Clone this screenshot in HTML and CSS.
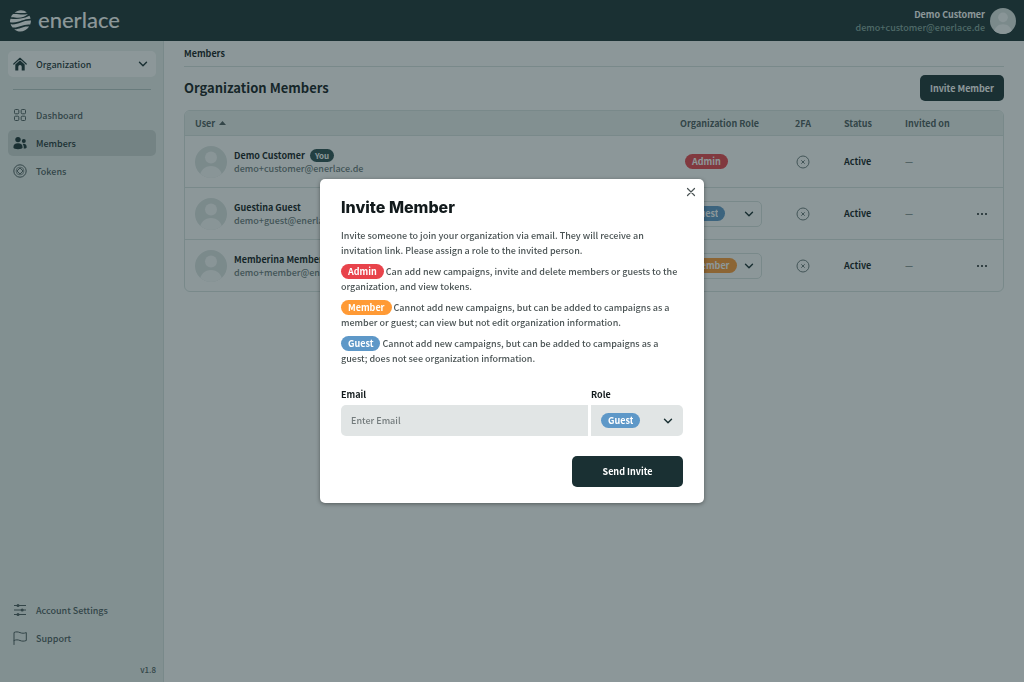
FILE: index.html
```
<!DOCTYPE html>
<html lang="en">

<head>
    <meta charset="utf-8">
    <meta name="viewport" content="width=device-width, initial-scale=1.0">
    <title>enerlace - Members</title>
    <link rel="stylesheet" href="styles.css">
</head>

<body>
    <!-- shared icons -->
    <svg class="sprite" aria-hidden="true">
        <symbol id="chevron" viewBox="0 0 10 10">
            <path d="M1.5 3.2 5 6.8 8.5 3.2" fill="none" stroke="currentColor" stroke-width="1.400" stroke-linecap="round" stroke-linejoin="round" />
        </symbol>
        <symbol id="avatar" viewBox="0 0 32 32">
            <clipPath id="round"><circle cx="16" cy="16" r="16" /></clipPath>
            <g clip-path="url(#round)">
                <rect width="32" height="32" fill="var(--avatar-back)" />
                <circle cx="16" cy="11.5" r="6" fill="var(--avatar-front)" />
                <path d="M4.500 32C5 24 10 20 16 20s11 4 11.500 12z" fill="var(--avatar-front)" />
            </g>
        </symbol>
        <symbol id="no" viewBox="0 0 14 14">
            <g fill="none" stroke="currentColor" stroke-width="1">
                <circle cx="7" cy="7" r="6" />
                <path d="M5.300 5.300l3.400 3.400M8.700 5.300l-3.400 3.400" />
            </g>
        </symbol>
        <symbol id="dots" viewBox="0 0 12 4">
            <g fill="currentColor">
                <circle cx="2" cy="2" r="1" />
                <circle cx="6" cy="2" r="1" />
                <circle cx="10" cy="2" r="1" />
            </g>
        </symbol>
    </svg>

    <header>
        <a class="logo" href="#">
            <svg width="21" height="22" viewBox="0 0 21 22" fill="currentColor" aria-hidden="true">
                <path d="M4.500 2.800C8-.7 13.500-.7 16.800 2.500 13 3.800 8 2.600 4.500 2.800z" />
                <path d="M1 7.200C1.700 5.500 2.300 4.500 3.300 4.100 8 3.700 12 5.500 18 3.900 16 6 12 7.800 8 7.800 5.500 7.800 3.500 7 1 7.200z" />
                <path d="M0 12.200C0 10.800.1 9.800.5 8.800 6 9 11 9.800 19.400 5.800 20 6.700 20.400 7.700 20.600 8.800 13 8.700 9 13.500 0 12.200z" />
                <path d="M.6 14.300C8 15.400 13 10 21 10.600 21 12 20.700 13.300 20.200 14.500 13 13.800 9 18 2.600 17.400 1.700 16.500 1 15.400.6 14.300z" />
                <path d="M4.200 19.200C9.500 19.500 12.500 15.800 19.200 16.500 15 22.500 8.500 23 4.200 19.200z" />
            </svg>
            <span>enerlace</span>
        </a>
        <div class="account">
            <div class="account-text">
                <strong>Demo Customer</strong>
                <span>demo+customer@enerlace.de</span>
            </div>
            <svg class="avatar" width="26" height="26"><use href="#avatar" /></svg>
        </div>
    </header>

    <div class="page">
        <aside>
            <button class="organization">
                <svg class="icon" viewBox="0 0 14 14" aria-hidden="true">
                    <path d="M.8 7 7 1.300 13.200 7" fill="none" stroke="currentColor" stroke-width="1.200" stroke-linecap="round" stroke-linejoin="round" />
                    <path d="M7 3.200 2.300 7.500V13.500h3V9.800a1.700 1.700 0 0 1 3.400 0v3.700h3V7.500z" fill="currentColor" />
                </svg>
                <span>Organization</span>
                <svg class="chevron"><use href="#chevron" /></svg>
            </button>
            <hr>
            <nav>
                <a class="link" href="#">
                    <svg class="icon" viewBox="0 0 14 14" fill="none" stroke="currentColor" aria-hidden="true">
                        <rect x="1.500" y="1.500" width="4.300" height="4.300" rx="1" />
                        <rect x="8.200" y="1.500" width="4.300" height="4.300" rx="1" />
                        <rect x="1.500" y="8.200" width="4.300" height="4.300" rx="1" />
                        <rect x="8.200" y="8.200" width="4.300" height="4.300" rx="1" />
                    </svg>
                    Dashboard
                </a>
                <a class="link valgt" href="#">
                    <svg class="icon" viewBox="0 0 14 14" fill="currentColor" aria-hidden="true">
                        <circle cx="5" cy="3.600" r="2.700" />
                        <path d="M.4 11.500C.4 8.500 2 7.200 5 7.200s4.600 1.300 4.600 4.300c0 2.200-9.200 2.200-9.200 0z" />
                        <circle cx="10.800" cy="5" r="2" />
                        <path d="M9.700 8c2.400-.7 4 .7 4 3.300 0 1.100-1.500 1.400-3 1.300.3-2-.1-3.500-1-4.600z" />
                    </svg>
                    Members
                </a>
                <a class="link" href="#">
                    <svg class="icon" viewBox="0 0 14 14" fill="none" stroke="currentColor" aria-hidden="true">
                        <circle cx="7" cy="7" r="6.200" />
                        <circle cx="7" cy="7" r="3.900" stroke-width=".6" />
                        <path d="M7 3.900 10.100 7 7 10.100 3.900 7z" stroke-linejoin="round" />
                    </svg>
                    Tokens
                </a>
            </nav>
            <nav class="bottom">
                <a class="link" href="#">
                    <svg class="icon" viewBox="0 0 14 14" fill="none" stroke="currentColor" aria-hidden="true">
                        <path d="M1 2.500h12M1 7h12M1 11.500h12" />
                        <g fill="currentColor" stroke="none">
                            <circle cx="5" cy="2.500" r="1.500" />
                            <circle cx="9.200" cy="7" r="1.500" />
                            <circle cx="5" cy="11.500" r="1.500" />
                        </g>
                    </svg>
                    Account Settings
                </a>
                <a class="link" href="#">
                    <svg class="icon" viewBox="0 0 14 14" fill="none" stroke="currentColor" stroke-linecap="round" aria-hidden="true">
                        <path d="M1 13.500V1.500c2-1 4-.7 6 .1s4 .9 6.300 0V9.500c-2.300.9-4.300.8-6.300 0s-4-1-6 0" />
                    </svg>
                    Support
                </a>
            </nav>
            <p class="version">v1.8</p>
        </aside>

        <main>
            <p class="crumb">Members</p>
            <div class="title">
                <h1>Organization Members</h1>
                <button class="invite">Invite Member</button>
            </div>

            <table>
                <thead>
                    <tr>
                        <th class="user">User <svg class="sort" width="7" height="4" viewBox="0 0 7 4"><path d="M0 4 3.500 0 7 4z" fill="currentColor" /></svg></th>
                        <th class="role">Organization Role</th>
                        <th class="twofa">2FA</th>
                        <th class="status">Status</th>
                        <th class="invited">Invited on</th>
                        <th class="more"></th>
                    </tr>
                </thead>
                <tbody>
                    <tr>
                        <td>
                            <div class="person">
                                <svg class="avatar" width="32" height="32"><use href="#avatar" /></svg>
                                <div>
                                    <div class="name">Demo Customer <span class="you">You</span></div>
                                    <div class="mail">demo+customer@enerlace.de</div>
                                </div>
                            </div>
                        </td>
                        <td><span class="pill admin fixed-role">Admin</span></td>
                        <td class="twofa"><svg width="14" height="14"><use href="#no" /></svg></td>
                        <td class="status">Active</td>
                        <td class="invited">—</td>
                        <td class="more"></td>
                    </tr>
                    <tr>
                        <td>
                            <div class="person">
                                <svg class="avatar" width="32" height="32"><use href="#avatar" /></svg>
                                <div>
                                    <div class="name">Guestina Guest</div>
                                    <div class="mail">demo+guest@enerlace.de</div>
                                </div>
                            </div>
                        </td>
                        <td>
                            <div class="picker">
                                <select class="pill guest" aria-label="Role of Guestina Guest">
                                    <option>Admin</option>
                                    <option>Member</option>
                                    <option selected>Guest</option>
                                </select>
                                <svg class="chevron"><use href="#chevron" /></svg>
                            </div>
                        </td>
                        <td class="twofa"><svg width="14" height="14"><use href="#no" /></svg></td>
                        <td class="status">Active</td>
                        <td class="invited">—</td>
                        <td class="more"><button aria-label="More"><svg width="12" height="4"><use href="#dots" /></svg></button></td>
                    </tr>
                    <tr>
                        <td>
                            <div class="person">
                                <svg class="avatar" width="32" height="32"><use href="#avatar" /></svg>
                                <div>
                                    <div class="name">Memberina Member</div>
                                    <div class="mail">demo+member@enerlace.de</div>
                                </div>
                            </div>
                        </td>
                        <td>
                            <div class="picker">
                                <select class="pill member" aria-label="Role of Memberina Member">
                                    <option>Admin</option>
                                    <option selected>Member</option>
                                    <option>Guest</option>
                                </select>
                                <svg class="chevron"><use href="#chevron" /></svg>
                            </div>
                        </td>
                        <td class="twofa"><svg width="14" height="14"><use href="#no" /></svg></td>
                        <td class="status">Active</td>
                        <td class="invited">—</td>
                        <td class="more"><button aria-label="More"><svg width="12" height="4"><use href="#dots" /></svg></button></td>
                    </tr>
                </tbody>
            </table>
        </main>
    </div>

    <div class="overlay">
        <div class="modal" role="dialog" aria-modal="true" aria-labelledby="modal-title">
            <button class="close" aria-label="Close">
                <svg width="10" height="10" viewBox="0 0 10 10"><path d="M1.500 1.500l7 7M8.500 1.500l-7 7" stroke="currentColor" stroke-width="1.200" stroke-linecap="round" /></svg>
            </button>
            <h2 id="modal-title">Invite Member</h2>
            <p>Invite someone to join your organization via email. They will receive an invitation link. Please assign a role to the invited person.</p>
            <p><span class="pill admin">Admin</span> Can add new campaigns, invite and delete members or guests to the organization, and view tokens.</p>
            <p><span class="pill member">Member</span> Cannot add new campaigns, but can be added to campaigns as a member or guest; can view but not edit organization information.</p>
            <p><span class="pill guest">Guest</span> Cannot add new campaigns, but can be added to campaigns as a guest; does not see organization information.</p>
            <form>
                <div class="fields">
                    <div class="field email">
                        <label for="email">Email</label>
                        <input id="email" type="email" placeholder="Enter Email">
                    </div>
                    <div class="field">
                        <label for="role">Role</label>
                        <div class="picker">
                            <select id="role" class="pill guest">
                                <option>Admin</option>
                                <option>Member</option>
                                <option selected>Guest</option>
                            </select>
                            <svg class="chevron"><use href="#chevron" /></svg>
                        </div>
                    </div>
                </div>
                <button class="send">Send Invite</button>
            </form>
        </div>
    </div>
</body>

</html>
```
FILE: styles.css
```
:root {
    --dark: #1a3033;
    --text: #121a1c;
    --grey: #4c5a5c;
    --line: #d8e2e0;
    --soft: #ebf1ef;
    --avatar-back: #dde4e3;
    --avatar-front: #f8fafa;
}

* {
    box-sizing: border-box;
}

body {
    margin: 0;
    min-height: 100vh;
    display: flex;
    flex-direction: column;
    font-family: "Noto Sans CJK SC", "Noto Sans", sans-serif;
    font-size: 9px;
    font-weight: 500;
    line-height: 13px;
    color: var(--text);
    background-color: white;
}

button,
input,
select {
    font: inherit;
    color: inherit;
    border: none;
    margin: 0;
    padding: 0;
    background: none;
}

svg {
    display: block;
    flex: none;
}

a {
    color: inherit;
    text-decoration: none;
}

.sprite {
    position: absolute;
    width: 0;
    height: 0;
}

.chevron {
    width: 10px;
    height: 10px;
}

.icon {
    width: 14px;
    height: 14px;
}

/* top bar */
header {
    height: 41px;
    padding: 0 8px 0 10px;
    display: flex;
    align-items: center;
    justify-content: space-between;
    background-color: var(--dark);
    color: white;
}

.logo {
    display: flex;
    align-items: center;
    gap: 7px;
    font-family: Lato, sans-serif;
    font-size: 22px;
    line-height: 22px;
}

.logo span {
    padding-bottom: 2px;
}

.account {
    display: flex;
    align-items: center;
    gap: 5px;
    text-align: right;
}

.account-text strong,
.account-text span {
    display: block;
}

.account-text span {
    color: #84a49c;
}

/* sidebar */
.page {
    flex: 1;
    display: flex;
}

aside {
    width: 164px;
    padding: 10px 7px 6px 8px;
    display: flex;
    flex-direction: column;
    background-color: var(--soft);
    border-right: 1px solid var(--line);
    color: var(--grey);
}

.organization,
.link {
    display: flex;
    align-items: center;
    gap: 9px;
    width: 100%;
    height: 26px;
    padding: 0 8px 0 5px;
    border-radius: 5px;
    text-align: left;
}

.organization {
    background-color: white;
    color: var(--dark);
}

.organization span {
    flex: 1;
}

hr {
    width: 138px;
    margin: 12px 5px;
    border: none;
    border-top: 1px solid #b6c6c4;
}

nav {
    display: flex;
    flex-direction: column;
    gap: 2px;
}

.valgt {
    background-color: #ced7d5;
    color: var(--dark);
}

.bottom {
    margin-top: auto;
}

.version {
    margin: 12px 0 0;
    text-align: right;
    font-size: 8px;
}

/* content */
main {
    flex: 1;
    padding: 0 20px;
}

.crumb {
    margin: 0;
    padding: 6px 0;
    border-bottom: 1px solid var(--line);
    font-weight: bold;
}

.title {
    display: flex;
    align-items: center;
    justify-content: space-between;
    margin: 8px 0 9px;
}

h1 {
    margin: 0;
    font-size: 13px;
    line-height: 20px;
}

.invite,
.send {
    height: 26px;
    padding: 0 10px;
    border-radius: 5px;
    background-color: var(--dark);
    color: white;
    font-weight: bold;
}

table {
    width: 100%;
    table-layout: fixed;
    border: 1px solid var(--line);
    border-radius: 6px;
    border-spacing: 0;
    overflow: hidden;
}

th {
    height: 24px;
    padding: 0;
    background-color: var(--soft);
    color: var(--grey);
    text-align: left;
}

th.user {
    padding-left: 10px;
}

th.role {
    width: 107px;
    padding-left: 5px;
}

.sort {
    display: inline-block;
    margin: 0 0 2px 2px;
    vertical-align: middle;
}

td {
    height: 52px;
    padding: 0;
    border-top: 1px solid var(--line);
}

th.twofa {
    width: 42px;
    text-align: center;
}

td.twofa {
    color: #6b797a;
}

td.twofa svg {
    margin: 0 auto;
}

.status {
    width: 61px;
    padding-left: 20px;
    font-weight: bold;
}

.invited {
    width: 76px;
    padding-left: 20px;
}

.more {
    width: 42px;
}

.more button {
    display: block;
    margin: 0 auto;
}

.person {
    display: flex;
    align-items: center;
    gap: 7px;
    padding-left: 10px;
}

.name {
    display: flex;
    align-items: center;
    gap: 5px;
    font-weight: bold;
}

.mail,
td.invited {
    color: #6b797a;
}

.you {
    padding: 0 5px;
    border-radius: 7px;
    background-color: #2c4f51;
    color: white;
    font-size: 8px;
}

.pill {
    display: inline-block;
    height: 15px;
    padding: 0 7px;
    border-radius: 8px;
    color: white;
    font-weight: bold;
    line-height: 15px;
    appearance: none;
    field-sizing: content;
}

.admin {
    background-color: #e8434b;
}

.member {
    background-color: #ff9a35;
}

.guest {
    background-color: #5e98c8;
}

.fixed-role {
    margin-left: 10px;
}

.picker {
    display: flex;
    align-items: center;
    justify-content: space-between;
    width: 87px;
    height: 26px;
    padding: 0 7px 0 10px;
    border: 1px solid var(--line);
    border-radius: 5px;
    color: var(--dark);
}

/* invite dialog */
.overlay {
    position: fixed;
    inset: 0;
    display: flex;
    align-items: center;
    justify-content: center;
    background-color: rgba(26, 48, 51, 0.5);
}

.modal {
    position: relative;
    width: 384px;
    padding: 17px 21px 16px;
    border-radius: 5px;
    background-color: white;
    box-shadow: 0 1px 4px rgba(0, 0, 0, 0.4);
    color: #4a5354;
}

.close {
    position: absolute;
    top: 8px;
    right: 8px;
}

h2 {
    margin: 0 0 10px;
    font-family: Inter, sans-serif;
    font-size: 16px;
    font-weight: 800;
    line-height: 22px;
    color: #121a1c;
}

.modal p {
    margin: 0 0 6px;
    padding-right: 5px;
    line-height: 15px;
}

.modal p .pill {
    vertical-align: top;
}

form {
    margin-top: 22px;
    color: #121a1c;
}

.fields {
    display: flex;
    gap: 3px;
}

.field label {
    display: block;
    margin-bottom: 4px;
    font-weight: bold;
}

.email {
    flex: 1;
}

.field input,
.field .picker {
    height: 31px;
    border: none;
    background-color: #e1e5e5;
}

.field input {
    width: 100%;
    padding: 0 10px;
    border-radius: 5px 0 0 5px;
}

.field input::placeholder {
    color: #747c7d;
}

.field .picker {
    width: 92px;
    padding-right: 10px;
    border-radius: 0 5px 5px 0;
}

.send {
    display: block;
    width: 111px;
    height: 31px;
    margin: 20px 0 0 auto;
}
```
